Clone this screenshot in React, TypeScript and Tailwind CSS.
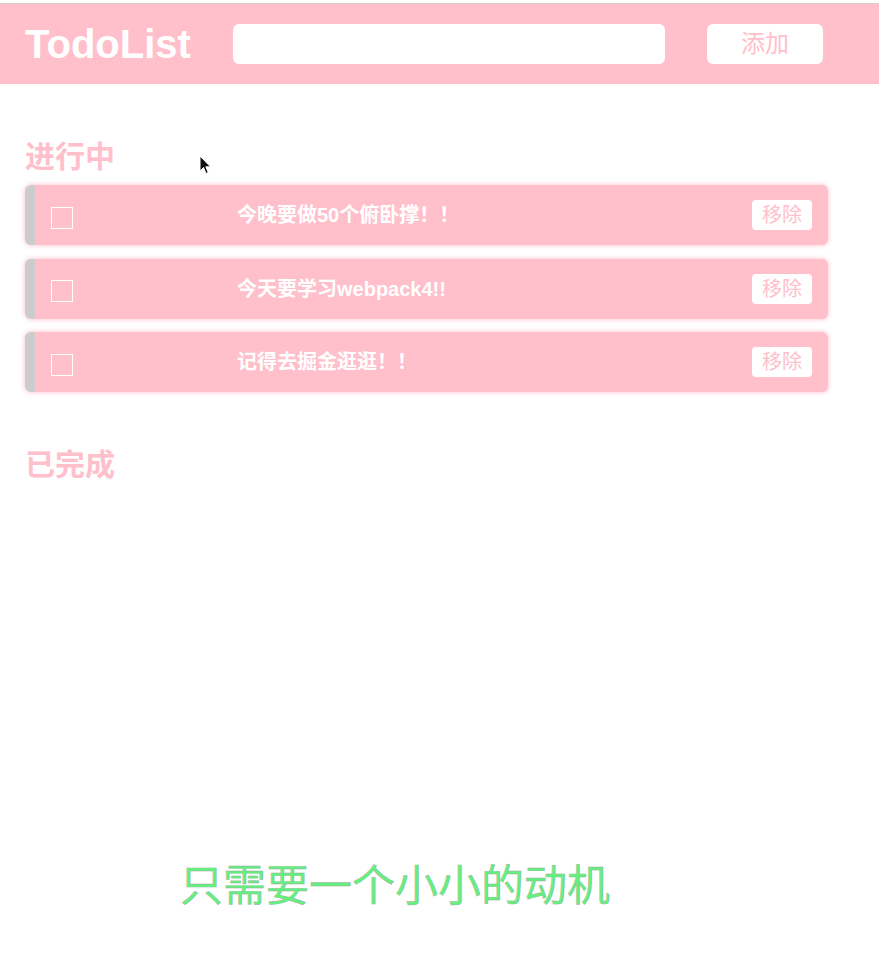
import React, { useState } from 'react';

interface Todo {
  id: number;
  title: string;
  done: boolean;
}

const initialTodos: Todo[] = [
  { id: 1, title: '今晚要做50个俯卧撑！！', done: false },
  { id: 2, title: '今天要学习webpack4!!', done: false },
  { id: 3, title: '记得去掘金逛逛！！', done: false },
];

const font = "font-['Liberation_Sans','Noto_Sans_CJK_SC',sans-serif]";

function TodoRow({ todo, onToggle, onRemove }: { todo: Todo; onToggle: () => void; onRemove: () => void }) {
  return (
    <li className="flex h-[60px] items-center rounded-md border-l-[10px] border-[#cccccc] bg-[#ffc0cb] shadow-[0_0_4px_1px_#ffd0d8]">
      <input
        type="checkbox"
        checked={todo.done}
        onChange={onToggle}
        className="ml-4 mt-[5px] h-[22px] w-[22px] shrink-0 appearance-none border border-white bg-transparent"
      />
      <p className="ml-[164px] flex-1 text-[20px] font-bold leading-none text-white">{todo.title}</p>
      <button
        onClick={onRemove}
        className="mr-4 h-[30px] w-[60px] rounded bg-white text-[20px] leading-none text-[#ffc0cb]"
      >
        移除
      </button>
    </li>
  );
}

export default function App() {
  const [todos, setTodos] = useState<Todo[]>(initialTodos);
  const [text, setText] = useState('');

  const add = () => {
    if (!text.trim()) return;
    setTodos([...todos, { id: Date.now(), title: text, done: false }]);
    setText('');
  };

  const toggle = (id: number) => setTodos(todos.map(x => (x.id === id ? { ...x, done: !x.done } : x)));
  const remove = (id: number) => setTodos(todos.filter(x => x.id !== id));

  const doing = todos.filter(t => !t.done);
  const done = todos.filter(t => t.done);

  return (
    <div className={`relative min-h-[962px] bg-white ${font}`}>
      {/* header */}
      <header className="mt-[3px] flex h-[81px] items-center border-t border-[#d0d0d0] bg-[#ffc0cb]">
        <h1 className="ml-[25px] w-[165px] text-[40px] font-bold leading-none text-white">TodoList</h1>
        <input
          value={text}
          onChange={e => setText(e.target.value)}
          className="ml-[43px] h-10 w-[432px] rounded-md bg-white px-2 text-lg outline-none"
        />
        <button onClick={add} className="ml-[42px] h-10 w-[116px] rounded-md bg-white text-[24px] text-[#ffc0cb]">
          添加
        </button>
      </header>

      <main className="ml-[25px] w-[803px]">
        <h2 className="mt-[51px] mb-[6px] text-[30px] font-bold leading-[44px] text-[#ffc0cb]">进行中</h2>
        <ul className="flex flex-col gap-[13.5px]">
          {doing.map(t => (
            <TodoRow key={t.id} todo={t} onToggle={() => toggle(t.id)} onRemove={() => remove(t.id)} />
          ))}
        </ul>

        <h2 className="mt-[51px] mb-[6px] text-[30px] font-bold leading-[44px] text-[#ffc0cb]">已完成</h2>
        <ul className="flex flex-col gap-[13.5px]">
          {done.map(t => (
            <TodoRow key={t.id} todo={t} onToggle={() => toggle(t.id)} onRemove={() => remove(t.id)} />
          ))}
        </ul>
      </main>

      <p className="mt-[361px] ml-[180px] text-[43px] leading-[64px] text-[#62f07e] [-webkit-text-stroke:0.4px_#a8a8a8]">
        只需要一个小小的动机
      </p>

      {/* mouse cursor in the capture */}
      <svg className="pointer-events-none absolute left-[199px] top-[152px]" width="13" height="20" viewBox="0 0 13 20">
        <path d="M1 1 L1 16 L4.5 12.5 L7 18.5 L9.3 17.5 L6.8 11.8 L11.5 11.8 Z" fill="#111" stroke="#fff" strokeWidth="1" />
      </svg>
    </div>
  );
}
